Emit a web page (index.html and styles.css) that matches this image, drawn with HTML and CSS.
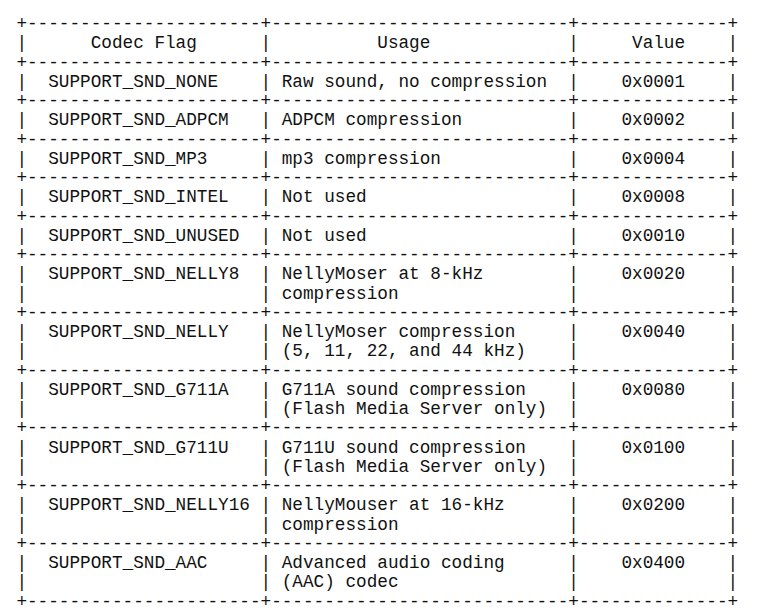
FILE: index.html
```html
<!DOCTYPE html>
<html lang="en">
<head>
<meta charset="utf-8">
<title>Sound codec flags</title>
<link rel="stylesheet" href="styles.css">
</head>
<body>
<main class="page">
<pre class="ascii-table">+----------------------+----------------------------+--------------+
|      Codec Flag      |          Usage             |     Value    |
+----------------------+----------------------------+--------------+
|  SUPPORT_SND_NONE    | Raw sound, no compression  |    0x0001    |
+----------------------+----------------------------+--------------+
|  SUPPORT_SND_ADPCM   | ADPCM compression          |    0x0002    |
+----------------------+----------------------------+--------------+
|  SUPPORT_SND_MP3     | mp3 compression            |    0x0004    |
+----------------------+----------------------------+--------------+
|  SUPPORT_SND_INTEL   | Not used                   |    0x0008    |
+----------------------+----------------------------+--------------+
|  SUPPORT_SND_UNUSED  | Not used                   |    0x0010    |
+----------------------+----------------------------+--------------+
|  SUPPORT_SND_NELLY8  | NellyMoser at 8-kHz        |    0x0020    |
|                      | compression                |              |
+----------------------+----------------------------+--------------+
|  SUPPORT_SND_NELLY   | NellyMoser compression     |    0x0040    |
|                      | (5, 11, 22, and 44 kHz)    |              |
+----------------------+----------------------------+--------------+
|  SUPPORT_SND_G711A   | G711A sound compression    |    0x0080    |
|                      | (Flash Media Server only)  |              |
+----------------------+----------------------------+--------------+
|  SUPPORT_SND_G711U   | G711U sound compression    |    0x0100    |
|                      | (Flash Media Server only)  |              |
+----------------------+----------------------------+--------------+
|  SUPPORT_SND_NELLY16 | NellyMouser at 16-kHz      |    0x0200    |
|                      | compression                |              |
+----------------------+----------------------------+--------------+
|  SUPPORT_SND_AAC     | Advanced audio coding      |    0x0400    |
|                      | (AAC) codec                |              |
+----------------------+----------------------------+--------------+</pre>
</main>
</body>
</html>
```

FILE: styles.css
```css
html, body {
  margin: 0;
  padding: 0;
  background: #ffffff;
}

.page {
  padding: 15px 0 0 16.4px;
}

.ascii-table {
  margin: 0;
  font-family: "Liberation Mono", monospace;
  font-size: 17.7px;
  line-height: 19.25px;
  color: #111111;
  white-space: pre;
}
```
